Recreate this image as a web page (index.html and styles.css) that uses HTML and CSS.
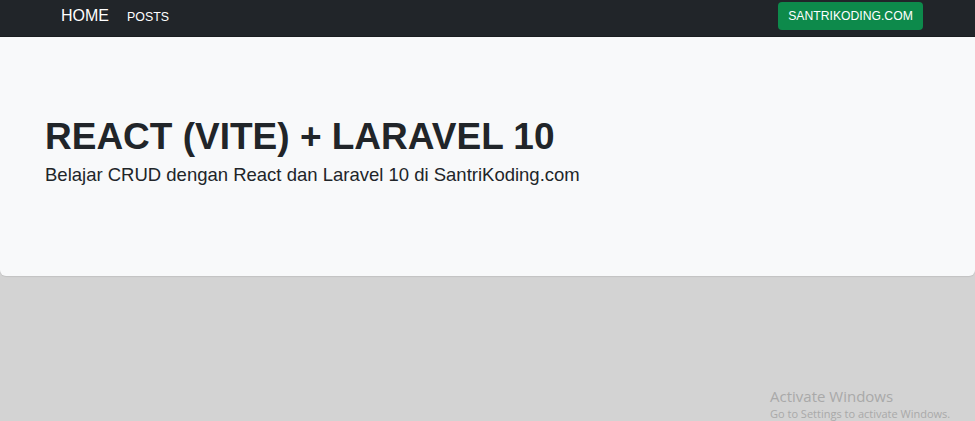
FILE: index.html
```html
<!DOCTYPE html>
<html lang="id">
<head>
<meta charset="utf-8">
<title>React + Laravel</title>
<link rel="stylesheet" href="styles.css">
</head>
<body>
<nav class="navbar">
  <div class="nav-inner">
    <div class="nav-links">
      <a class="brand" href="#">HOME</a>
      <a class="nav-link" href="#">POSTS</a>
    </div>
    <a class="btn-green" href="#">SANTRIKODING.COM</a>
  </div>
</nav>
<section class="jumbotron">
  <h1 class="title">REACT (VITE) + LARAVEL 10</h1>
  <p class="lead">Belajar CRUD dengan React dan Laravel 10 di SantriKoding.com</p>
</section>
<div class="watermark">
  <div class="wm-title">Activate Windows</div>
  <div class="wm-sub">Go to Settings to activate Windows.</div>
</div>
</body>
</html>
```
FILE: styles.css
```css
* { box-sizing: border-box; }
html, body { height: 100%; }
body {
  margin: 0;
  background: #d3d3d3;
  font-family: "Liberation Sans", Arial, sans-serif;
  color: #212529;
  overflow: hidden;
}
.navbar {
  background: #212529;
  height: 37px;
  border-bottom: 1px solid #1a1d20;
}
.nav-inner {
  display: flex;
  justify-content: space-between;
  align-items: flex-start;
  padding: 2px 52px 0 61px;
}
.nav-links {
  display: flex;
  align-items: baseline;
  gap: 18px;
  padding-top: 5px;
}
.nav-links a { color: #fff; text-decoration: none; }
.brand { font-size: 16px; }
.nav-link { font-size: 12.4px; color: rgba(255,255,255,.92); }
.btn-green {
  display: block;
  width: 145px;
  text-align: center;
  background: #0d8a4b;
  color: #fff;
  text-decoration: none;
  font-size: 12.2px;
  padding: 7px 0;
  border-radius: 4px;
  line-height: 14px;
}
.jumbotron {
  background: #f8f9fa;
  height: 239px;
  padding: 81px 45px 0 45px;
  border-radius: 0 0 6px 6px;
  box-shadow: 0 1px 1px rgba(0,0,0,.08);
}
.title {
  margin: 0;
  font-size: 37px;
  font-weight: 700;
  line-height: 1;
  letter-spacing: 0;
}
.lead {
  margin: 9px 0 0;
  font-size: 18.5px;
  line-height: 1.2;
}
.watermark {
  position: absolute;
  left: 770px;
  top: 386px;
  color: #a9a9a9;
  font-family: "Open Sans", "Noto Sans", sans-serif;
}
.wm-title { font-size: 15px; line-height: 20px; }
.wm-sub { font-size: 11px; line-height: 15px; }
```
